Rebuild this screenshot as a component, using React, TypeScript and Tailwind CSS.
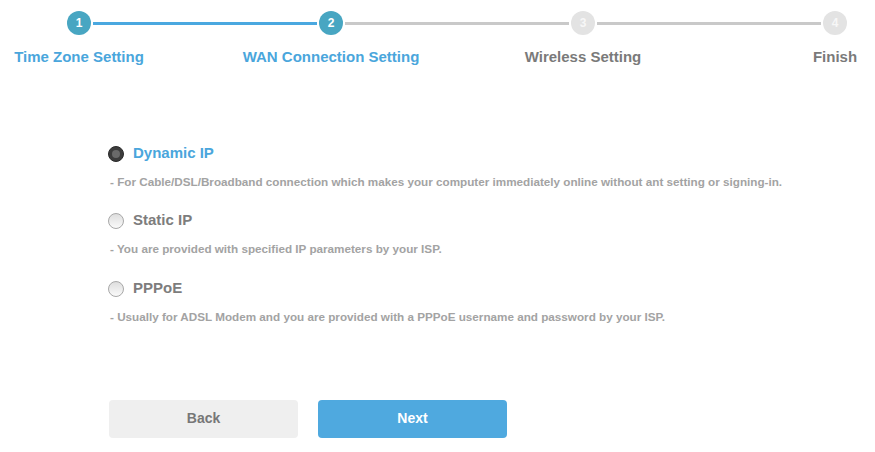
const steps = [
  { n: 1, label: 'Time Zone Setting', done: true },
  { n: 2, label: 'WAN Connection Setting', done: true },
  { n: 3, label: 'Wireless Setting', done: false },
  { n: 4, label: 'Finish', done: false },
]

const options = [
  {
    id: 'dynamic',
    title: 'Dynamic IP',
    desc: '- For Cable/DSL/Broadband connection which makes your computer immediately online without ant setting or signing-in.',
    gap: '',
  },
  {
    id: 'static',
    title: 'Static IP',
    desc: '- You are provided with specified IP parameters by your ISP.',
    gap: 'mt-[22px]',
  },
  {
    id: 'pppoe',
    title: 'PPPoE',
    desc: '- Usually for ADSL Modem and you are provided with a PPPoE username and password by your ISP.',
    gap: 'mt-[23px]',
  },
]

function Radio({ checked }: { checked: boolean }) {
  if (checked) {
    return (
      <span className="w-[16px] h-[16px] rounded-full bg-[#3c3c3c] border border-[#2a2a2a] flex items-center justify-center shrink-0">
        <span className="w-[8px] h-[8px] rounded-full bg-[#6a6a6a]" />
      </span>
    )
  }
  return (
    <span className="w-[16px] h-[16px] rounded-full border border-[#a8a8a8] bg-gradient-to-b from-[#dedede] to-[#fafafa] shrink-0" />
  )
}

export default function App() {
  const selected = 'dynamic'

  return (
    <div className="w-[875px] h-[452px] bg-white overflow-hidden font-['Liberation_Sans',Arial,sans-serif]">
      {/* Pasos */}
      <div className="flex items-center pl-[67px] pt-[11px]">
        {steps.map((s, i) => (
          <div key={s.n} className="flex items-center shrink-0">
            <span
              className={
                s.done
                  ? 'w-[24px] h-[24px] rounded-full bg-[#48a6c2] text-white text-[12px] font-bold flex items-center justify-center'
                  : 'w-[24px] h-[24px] rounded-full bg-[#e3e3e3] text-[#f7f7f7] text-[12px] font-bold flex items-center justify-center'
              }
            >
              {s.n}
            </span>
            {i < steps.length - 1 && (
              <span
                className={
                  steps[i + 1].done
                    ? 'w-[224px] h-[3px] mx-[2px] bg-[#4aa8e0]'
                    : 'w-[224px] h-[3px] mx-[2px] bg-[#c9c9c9]'
                }
              />
            )}
          </div>
        ))}
      </div>
      <div className="flex gap-[94px] mt-[11px]">
        {steps.map((s) => (
          <div key={s.n} className="w-[158px] shrink-0 flex justify-center">
            <p
              className={
                s.done
                  ? 'text-[15px] font-bold text-[#4aa6dc] whitespace-nowrap'
                  : 'text-[15px] font-bold text-[#7a7a7a] whitespace-nowrap'
              }
            >
              {s.label}
            </p>
          </div>
        ))}
      </div>

      {/* Opciones */}
      <div className="pl-[108px] pt-[75px] flex flex-col">
        {options.map((o) => (
          <div key={o.id} className={o.gap}>
            <label className="flex items-center gap-[9px] h-[20px]">
              <Radio checked={o.id === selected} />
              <span
                className={
                  o.id === selected
                    ? 'text-[15px] font-bold text-[#4aa6dc]'
                    : 'text-[15px] font-bold text-[#7d7d7d]'
                }
              >
                {o.title}
              </span>
            </label>
            <p className="mt-[11px] ml-[2px] text-[11.7px] leading-[14px] font-bold text-[#a3a3a3] whitespace-nowrap">{o.desc}</p>
          </div>
        ))}
      </div>

      {/* Botones */}
      <div className="flex gap-[20px] pl-[109px] mt-[76px]">
        <button className="w-[189px] h-[38px] rounded-[4px] bg-[#efefef] text-[14px] font-bold text-[#777]">
          Back
        </button>
        <button className="w-[189px] h-[38px] rounded-[4px] bg-[#4fa9df] text-[14px] font-bold text-white">
          Next
        </button>
      </div>
    </div>
  )
}
